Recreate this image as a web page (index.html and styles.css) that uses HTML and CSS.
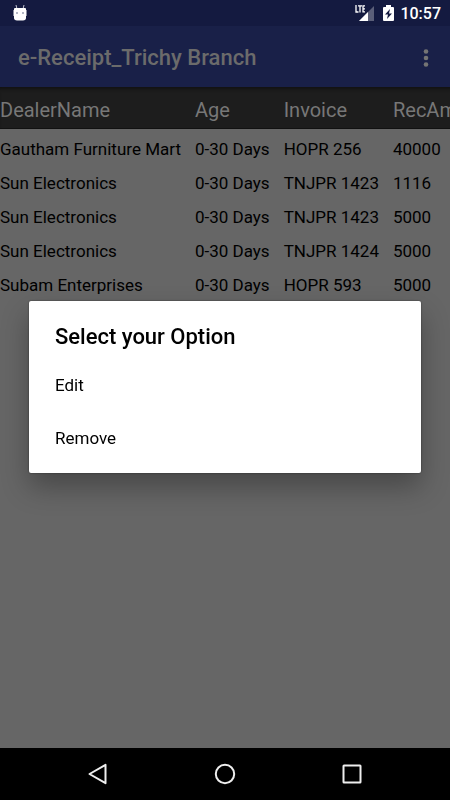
FILE: index.html
```html
<!DOCTYPE html>
<html lang="en">
<head>
<meta charset="utf-8">
<meta name="viewport" content="width=device-width, initial-scale=1">
<title>e-Receipt</title>
<link rel="stylesheet" href="styles.css">
</head>
<body>
<header class="status">
  <svg class="robot" width="14" height="18" viewBox="0 0 14 18" aria-hidden="true">
    <path d="M3 1l1 4M11 1l-1 4" stroke="#c4c6d3" stroke-width="1"/>
    <path d="M2 4h10q1 0 1 1v1h.5v6H13v2q0 2-3 2.500H4Q1 16 1 14v-2H.5V6H1V5q0-1 1-1z" fill="#fff"/>
    <circle cx="4" cy="9" r=".8" fill="#555b7c"/><circle cx="10" cy="9" r=".8" fill="#555b7c"/>
  </svg>
  <div class="status-right">
    <div class="radios">
      <svg width="19" height="17" viewBox="0 0 19 17" aria-hidden="true">
        <path d="M19 1v15H4z" fill="#5b5f79"/>
        <path d="M13 7v9H4z" fill="#fff"/>
        <path d="M0 0h10.500v8H0z" fill="#141a40"/>
        <path d="M1 0v7h2.500M3 .8h4M5 .8V7.500M10 .8H8v6h2M8 3.800h2" fill="none" stroke="#fff" stroke-width="1.300"/>
      </svg>
      <svg width="11" height="17" viewBox="0 0 11 17" aria-hidden="true">
        <path d="M3 0h5v2h2q1 0 1 1v12q0 1-1 1H1q-1 0-1-1V3q0-1 1-1h2z" fill="#fff"/>
        <path d="M7 4L2 9.500h3L4 14l5-5.500H6z" fill="#141a40"/>
      </svg>
    </div>
    <time class="clock">10:57</time>
  </div>
</header>
<div class="appbar">
  <h1 class="app-title">e-Receipt_Trichy Branch</h1>
  <button class="more" type="button" aria-label="More options">
    <svg width="6" height="18" viewBox="0 0 6 18" aria-hidden="true"><g fill="#747474"><circle cx="3" cy="2.500" r="2.300"/><circle cx="3" cy="9" r="2.300"/><circle cx="3" cy="15.500" r="2.300"/></g></svg>
  </button>
</div>
<main class="content">
  <table class="receipts">
    <thead>
      <tr><th>DealerName</th><th>Age</th><th>Invoice</th><th>RecAmt</th></tr>
    </thead>
    <tbody>
      <tr><td>Gautham Furniture Mart</td><td>0-30 Days</td><td>HOPR 256</td><td>40000</td></tr>
      <tr><td>Sun Electronics</td><td>0-30 Days</td><td>TNJPR 1423</td><td>1116</td></tr>
      <tr><td>Sun Electronics</td><td>0-30 Days</td><td>TNJPR 1423</td><td>5000</td></tr>
      <tr><td>Sun Electronics</td><td>0-30 Days</td><td>TNJPR 1424</td><td>5000</td></tr>
      <tr><td>Subam Enterprises</td><td>0-30 Days</td><td>HOPR 593</td><td>5000</td></tr>
    </tbody>
  </table>
</main>
<div class="overlay">
  <section class="dialog" role="dialog" aria-labelledby="dialog-title">
    <h2 class="dialog-title" id="dialog-title">Select your Option</h2>
    <button class="option" type="button">Edit</button>
    <button class="option" type="button">Remove</button>
  </section>
</div>
<nav class="navbar">
  <button class="nav-button" type="button" aria-label="Back">
    <svg width="22" height="22" viewBox="0 0 22 22" aria-hidden="true"><path d="M18.500 1.800v18.400L2.500 11z"/></svg>
  </button>
  <button class="nav-button" type="button" aria-label="Home">
    <svg width="22" height="22" viewBox="0 0 22 22" aria-hidden="true"><circle cx="11" cy="11" r="9.200"/></svg>
  </button>
  <button class="nav-button" type="button" aria-label="Recent apps">
    <svg width="22" height="22" viewBox="0 0 22 22" aria-hidden="true"><rect x="2.500" y="2.500" width="17" height="17" rx=".5"/></svg>
  </button>
</nav>
</body>
</html>
```
FILE: styles.css
```css
* {
  box-sizing: border-box;
}

body {
  margin: 0;
  min-height: 100vh;
  display: flex;
  flex-direction: column;
  overflow-x: hidden;
  background: #666;
  color: #000;
  font-family: Roboto, "Liberation Sans", sans-serif;
}

button {
  margin: 0;
  padding: 0;
  border: 0;
  background: none;
  color: inherit;
  font: inherit;
}

svg {
  display: block;
}

.status {
  height: 26px;
  padding: 0 9px 0 13px;
  display: flex;
  align-items: center;
  justify-content: space-between;
  background: #141a40;
}

.status-right {
  display: flex;
  align-items: center;
  gap: 6px;
}

.radios {
  display: flex;
  gap: 9px;
}

.clock {
  color: #fff;
  font-size: 16px;
  font-weight: 500;
  line-height: 24px;
  padding-top: 2px;
}

.appbar {
  height: 61px;
  padding: 2px 18px 0;
  display: flex;
  align-items: center;
  justify-content: space-between;
  background: #192048;
}

.app-title {
  margin: 0;
  color: #6b6b6b;
  font-size: 22px;
  font-weight: 500;
  line-height: 32px;
}

.more {
  padding: 6px;
  margin-right: -3px;
}

.content {
  flex: 1;
  overflow: hidden;
}

.receipts {
  min-width: 100%;
  border-collapse: collapse;
  white-space: nowrap;
}

.receipts th,
.receipts td {
  padding: 0 14px 0 0;
  text-align: left;
  font-weight: 400;
}

.receipts thead {
  background: #1d1d1d;
  box-shadow: inset 0 4px 4px -3px #0c0c0c;
}

.receipts th {
  height: 41px;
  padding-top: 5px;
  border-bottom: 1px solid #111;
  color: #777;
  font-size: 20px;
}

.receipts td {
  height: 34px;
  font-size: 17px;
}

.receipts tbody tr:first-child td {
  height: 38px;
  padding-top: 4px;
}

.overlay {
  position: fixed;
  inset: 26px 0 52px;
  padding: 0 29px;
  display: flex;
  align-items: center;
}

.dialog {
  flex: 1;
  padding: 18px 0 9px;
  border-radius: 2px;
  background: #fff;
  box-shadow: 0 14px 28px rgba(0, 0, 0, 0.3), 0 0 2px rgba(0, 0, 0, 0.5);
}

.dialog-title {
  margin: 0;
  padding: 0 26px 3px;
  font-size: 22px;
  font-weight: 500;
  line-height: 36px;
}

.option {
  display: block;
  width: 100%;
  height: 53px;
  padding: 0 26px;
  text-align: left;
  font-size: 17px;
}

.navbar {
  height: 52px;
  padding: 0 34px;
  display: flex;
  background: #000;
}

.nav-button {
  flex: 1;
  display: flex;
  align-items: center;
  justify-content: center;
}

.nav-button svg {
  fill: none;
  stroke: #eee;
  stroke-width: 2;
  stroke-linejoin: round;
}
```
